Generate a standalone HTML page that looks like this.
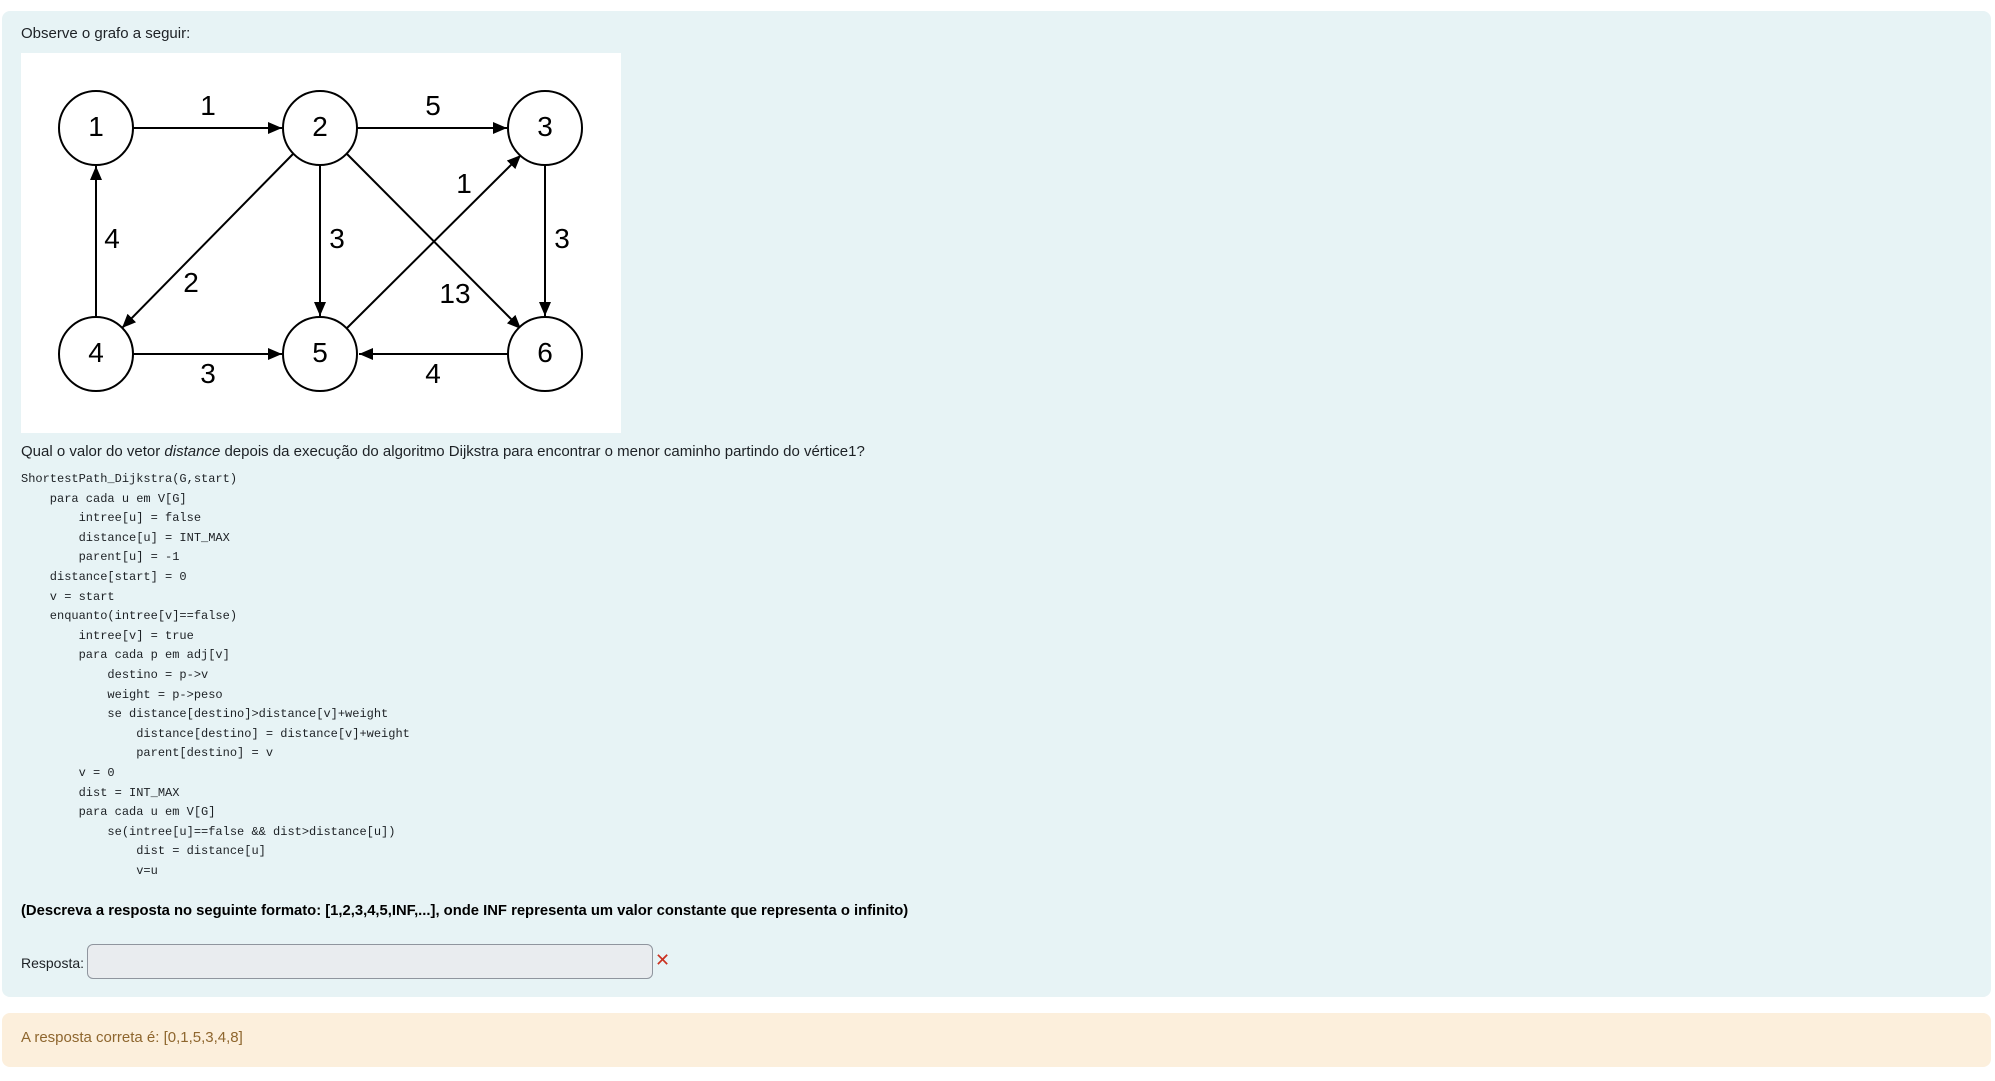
<!DOCTYPE html>
<html><head><meta charset="utf-8"><style>
body{margin:0;width:1995px;height:1081px;background:#fff;font-family:"Liberation Sans",sans-serif;color:#1d2125;position:relative;overflow:hidden}
.panel{position:absolute;left:2px;top:11px;width:1989px;height:986px;background:#e7f3f5;border-radius:8px}
.t{position:absolute;left:21px;font-size:15px;white-space:nowrap}
.img{position:absolute;left:21px;top:53px;width:600px;height:380px;background:#fff}
pre{position:absolute;left:21px;top:470px;margin:0;font-family:"Liberation Mono",monospace;font-size:12px;line-height:19.6px;color:#1d2125}
.inp{position:absolute;left:87px;top:944px;width:566px;height:35px;box-sizing:border-box;background:#e9ecef;border:1px solid #8f959e;border-radius:6px}
.x{position:absolute;left:655px;top:950px;color:#ca3120;font-size:18px}
.ans{position:absolute;left:2px;top:1013px;width:1989px;height:54px;background:#fcefdc;border-radius:8px}
</style></head><body>
<div class="panel"></div>
<div class="t" style="top:25px">Observe o grafo a seguir:</div>
<div class="img"><svg width="600" height="380" font-family="Liberation Sans,sans-serif" font-size="28" text-anchor="middle">
<defs><marker id="a" markerWidth="16" markerHeight="16" refX="14" refY="6" orient="auto" markerUnits="userSpaceOnUse"><path d="M0,0 L14,6 L0,12z" fill="#000"/></marker></defs>
<g stroke="#000" stroke-width="2" fill="none">
<line x1="112" y1="75" x2="261" y2="75" marker-end="url(#a)"/>
<line x1="336" y1="75" x2="486" y2="75" marker-end="url(#a)"/>
<line x1="75" y1="264" x2="75" y2="113" marker-end="url(#a)"/>
<line x1="299" y1="112" x2="299" y2="263" marker-end="url(#a)"/>
<line x1="524" y1="112" x2="524" y2="263" marker-end="url(#a)"/>
<line x1="112" y1="301" x2="261" y2="301" marker-end="url(#a)"/>
<line x1="487" y1="301" x2="338" y2="301" marker-end="url(#a)"/>
<line x1="272" y1="101" x2="101" y2="275" marker-end="url(#a)"/>
<line x1="326" y1="101" x2="500" y2="276" marker-end="url(#a)"/>
<line x1="326" y1="275" x2="500" y2="102" marker-end="url(#a)"/>
<g fill="#fff"><circle cx="75" cy="75" r="37"/><circle cx="299" cy="75" r="37"/><circle cx="524" cy="75" r="37"/><circle cx="75" cy="301" r="37"/><circle cx="299" cy="301" r="37"/><circle cx="524" cy="301" r="37"/></g>
</g>
<g fill="#000">
<text x="75" y="83">1</text><text x="299" y="83">2</text><text x="524" y="83">3</text><text x="75" y="309">4</text><text x="299" y="309">5</text><text x="524" y="309">6</text>
<text x="187" y="62">1</text><text x="412" y="62">5</text><text x="443" y="140">1</text><text x="91" y="195">4</text><text x="316" y="195">3</text><text x="541" y="195">3</text><text x="170" y="239">2</text><text x="434" y="250">13</text><text x="187" y="330">3</text><text x="412" y="330">4</text>
</g></svg></div>
<div class="t" style="top:443px">Qual o valor do vetor <i>distance</i> depois da execução do algoritmo Dijkstra para encontrar o menor caminho partindo do vértice1?</div>
<pre>ShortestPath_Dijkstra(G,start)
    para cada u em V[G]
        intree[u] = false
        distance[u] = INT_MAX
        parent[u] = -1
    distance[start] = 0
    v = start
    enquanto(intree[v]==false)
        intree[v] = true
        para cada p em adj[v]
            destino = p-&gt;v
            weight = p-&gt;peso
            se distance[destino]&gt;distance[v]+weight
                distance[destino] = distance[v]+weight
                parent[destino] = v
        v = 0
        dist = INT_MAX
        para cada u em V[G]
            se(intree[u]==false &amp;&amp; dist&gt;distance[u])
                dist = distance[u]
                v=u</pre>
<div class="t" style="top:903px;font-weight:bold;color:#000;font-size:14.8px">(Descreva a resposta no seguinte formato: [1,2,3,4,5,INF,...], onde INF representa um valor constante que representa o infinito)</div>
<div class="t" style="top:955px;font-size:14px">Resposta:</div>
<div class="inp"></div>
<div class="x">✕</div>
<div class="ans"></div>
<div class="t" style="top:1029px;color:#8e662e">A resposta correta é: [0,1,5,3,4,8]</div>
</body></html>
